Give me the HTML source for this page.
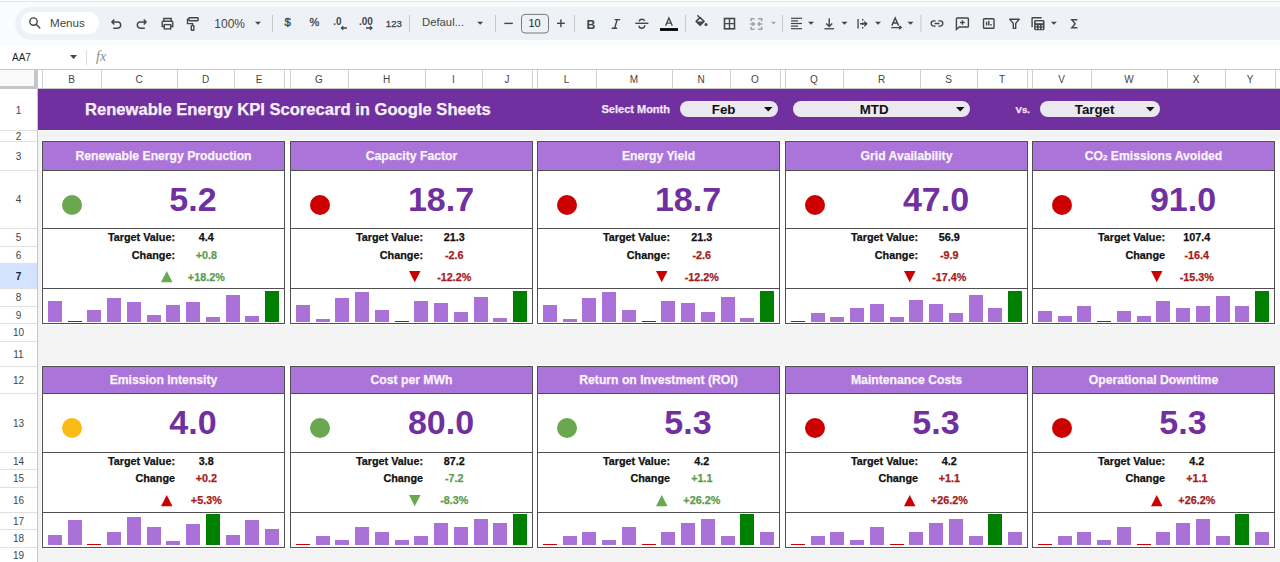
<!DOCTYPE html><html><head><meta charset="utf-8"><style>
*{box-sizing:border-box;margin:0;padding:0}
html,body{width:1280px;height:562px;overflow:hidden;background:#fff;font-family:"Liberation Sans", sans-serif}
.a{position:absolute}
.t{position:absolute;white-space:nowrap;line-height:1}
.s{-webkit-text-stroke:0.25px currentColor}
.ic{position:absolute;overflow:visible}

</style></head><body>
<div class="a" style="left:0;top:0;width:1280px;height:69px;background:#f9fbfd"></div>
<div class="a" style="left:0;top:1px;width:1280px;height:1px;background:#e6e6e6"></div>
<div class="a" style="left:15px;top:7px;width:1300px;height:33px;background:#eef1f6;border-radius:16.5px"></div>
<div class="a" style="left:0;top:46px;width:1280px;height:23px;background:#fff"></div>
<div class="a" style="left:21px;top:12px;width:78px;height:22px;background:#fff;border-radius:11px"></div>
<svg class="ic" style="left:0;top:0" width="1280" height="46" viewBox="0 0 1280 46"><circle cx="33.5" cy="21.6" r="3.7" fill="none" stroke="#444746" stroke-width="1.4"/><path d="M36.2 24.3L39.8 27.9" fill="none" stroke="#444746" stroke-width="1.4" stroke-linecap="round"/><path d="M114.3 19.4L111.8 22L114.3 24.6M112.2 22H117.6A3.1 3.1 0 0 1 117.6 28.2H113.2" fill="none" stroke="#444746" stroke-width="1.4" stroke-linejoin="round"/><path d="M143.7 19.4L146.2 22L143.7 24.6M145.8 22H140.4A3.1 3.1 0 0 0 140.4 28.2H144.8" fill="none" stroke="#444746" stroke-width="1.4" stroke-linejoin="round"/><path d="M163.8 21V18.5H171.2V21" fill="none" stroke="#444746" stroke-width="1.4"/><path d="M164 26.5H162.2V22.2Q162.2 21.2 163.2 21.2H171.8Q172.8 21.2 172.8 22.2V26.5H171" fill="none" stroke="#444746" stroke-width="1.4"/><rect x="164.3" y="24.6" width="6.4" height="4.3" fill="none" stroke="#444746" stroke-width="1.4"/><rect x="188.9" y="17.7" width="9.2" height="3" rx="0.6" fill="none" stroke="#444746" stroke-width="1.4"/><path d="M188.9 19.2H187.5V23.6H192.6V25.6" fill="none" stroke="#444746" stroke-width="1.4"/><rect x="191.3" y="25.6" width="2.6" height="4.6" rx="0.5" fill="none" stroke="#444746" stroke-width="1.4"/><path d="M255.0 21.8h6.0l-3.0 3.0z" fill="#444746"/><rect x="272.0" y="15" width="1" height="17" fill="#c7c7c7"/><rect x="409.0" y="15" width="1" height="17" fill="#c7c7c7"/><path d="M477.2 21.8h6.0l-3.0 3.0z" fill="#444746"/><rect x="495.0" y="15" width="1" height="17" fill="#c7c7c7"/><rect x="504.3" y="22.7" width="8.5" height="1.4" fill="#444746"/><rect x="521.5" y="14.4" width="27" height="18.6" rx="3.5" fill="none" stroke="#7a7a7a" stroke-width="1"/><rect x="557" y="22.6" width="7.8" height="1.4" fill="#444746"/><rect x="560.2" y="19.4" width="1.4" height="7.8" fill="#444746"/><rect x="574.0" y="15" width="1" height="17" fill="#c7c7c7"/><path d="M635.3 23.3H648.4" fill="none" stroke="#444746" stroke-width="1.4"/><path d="M639.2 21.3Q639.6 19.2 641.9 19.2Q644.2 19.2 644.6 21.0M644.7 25.3Q644.6 28.3 641.9 28.3Q639.1 28.3 639 25.8" fill="none" stroke="#444746" stroke-width="1.4"/><path d="M665.6 25.7L668.9 17.9L672.3 25.7M666.8 23.1H671.1" fill="none" stroke="#444746" stroke-width="1.4"/><rect x="660" y="28.1" width="18" height="2.8" fill="#000"/><rect x="685.0" y="15" width="1" height="17" fill="#c7c7c7"/><path d="M697.4 15.3L700.3 18.2" fill="none" stroke="#444746" stroke-width="1.4" stroke-width="1.6"/><path d="M696.2 21.4L700.1 17.5L704 21.4L700.1 25.3Z" fill="none" stroke="#444746" stroke-width="1.6" stroke-linejoin="round"/><path d="M696.2 21.4H704L700.1 25.3Z" fill="#444746"/><circle cx="706" cy="24.4" r="1.5" fill="#444746"/><rect x="724.5" y="18.5" width="10" height="10.3" fill="none" stroke="#444746" stroke-width="1.6" stroke-width="1.6"/><path d="M729.5 18.5V28.8M724.5 23.65H734.5" fill="none" stroke="#444746" stroke-width="1.4"/><path d="M754.6 18.8H751.2V21.3M751.2 26.7V29.2H754.6M758 18.8H761.6V21.3M761.6 26.7V29.2H758M749.8 24H754.3M752.6 22.2L754.4 24L752.6 25.8M762.6 24H758.1M759.8 22.2L758 24L759.8 25.8" fill="none" stroke="#a0a3a8" stroke-width="1.6"/><path d="M771.0 21.8h5.0l-2.5 2.8z" fill="#a0a3a8"/><rect x="782.0" y="15" width="1" height="17" fill="#c7c7c7"/><rect x="791" y="17.7" width="11.0" height="1.2" fill="#444746"/><rect x="791" y="20.3" width="7.0" height="1.2" fill="#444746"/><rect x="791" y="22.9" width="11.0" height="1.2" fill="#444746"/><rect x="791" y="25.5" width="7.0" height="1.2" fill="#444746"/><rect x="791" y="28.1" width="11.0" height="1.2" fill="#444746"/><path d="M808.0 21.8h6.0l-3.0 3.0z" fill="#444746"/><path d="M829.2 18.2V26.5M826.2 23.5L829.2 26.6L832.2 23.5" fill="none" stroke="#444746" stroke-width="1.4"/><rect x="824.4" y="28.1" width="9.6" height="1.3" fill="#444746"/><path d="M841.5 21.8h6.0l-3.0 3.0z" fill="#444746"/><rect x="857.4" y="19" width="1.3" height="9.6" fill="#444746"/><path d="M862.7 19V20.5M862.7 22.5V25M862.7 27V28.6" fill="none" stroke="#444746" stroke-width="1.4"/><path d="M860 23.8H866.7M864.3 21.4L866.7 23.8L864.3 26.2" fill="none" stroke="#444746" stroke-width="1.4"/><path d="M875.0 21.8h6.0l-3.0 3.0z" fill="#444746"/><path d="M891.8 25.6L895.2 18L898.6 25.6M893 23H897.4" fill="none" stroke="#444746" stroke-width="1.4"/><path d="M891.2 27.6H901.2M899.3 26L901.2 27.6L899.3 29.2" fill="none" stroke="#444746" stroke-width="1.4"/><path d="M907.5 21.8h6.0l-3.0 3.0z" fill="#444746"/><rect x="920.5" y="15" width="1" height="17" fill="#c7c7c7"/><path d="M935.6 20.9H933.8A2.6 2.6 0 0 0 933.8 26.1H935.6M938.4 20.9H940.2A2.6 2.6 0 0 1 940.2 26.1H938.4M934.6 23.5H939.4" fill="none" stroke="#444746" stroke-width="1.4" stroke-width="1.6"/><path d="M956.4 29.5V18.8Q956.4 18 957.2 18H967.6Q968.4 18 968.4 18.8V26.2Q968.4 27 967.6 27H959.2Z" fill="none" stroke="#444746" stroke-width="1.4"/><path d="M962.4 20.2V24.8M960.1 22.5H964.7" fill="none" stroke="#444746" stroke-width="1.4"/><rect x="983.5" y="18.7" width="10.5" height="9.6" rx="0.8" fill="none" stroke="#444746" stroke-width="1.4"/><path d="M986.6 21.8V25.6M988.8 20.8V25.6M991 24V25.6" fill="none" stroke="#444746" stroke-width="1.4" stroke-width="1.3"/><path d="M1009.8 19.2H1019.2L1015.7 23.4V28.4H1013.3V23.4Z" fill="none" stroke="#444746" stroke-width="1.4" stroke-linejoin="round"/><path d="M1032.1 27.2V18.3Q1032.1 17.7 1032.7 17.7H1041.6" fill="none" stroke="#444746" stroke-width="1.4" stroke-width="1.5"/><rect x="1034.1" y="20" width="10.4" height="10.3" rx="1.4" fill="#444746"/><rect x="1035.7" y="21.4" width="7.2" height="1.8" fill="#eef1f6"/><circle cx="1036.3" cy="25.7" r="0.8" fill="#eef1f6"/><circle cx="1039.3" cy="25.7" r="0.8" fill="#eef1f6"/><circle cx="1042.3" cy="25.7" r="0.8" fill="#eef1f6"/><circle cx="1036.3" cy="28.4" r="0.8" fill="#eef1f6"/><circle cx="1039.3" cy="28.4" r="0.8" fill="#eef1f6"/><circle cx="1042.3" cy="28.4" r="0.8" fill="#eef1f6"/><path d="M1050.8 21.8h6.0l-3.0 3.0z" fill="#444746"/><path d="M1077.4 19.8H1071.8L1075.2 23.8L1071.8 27.8H1077.4" fill="none" stroke="#444746" stroke-width="1.4" stroke-width="1.7" stroke-linejoin="miter"/><path d="M347 28H341.5M343.3 26.3L341.5 28L343.3 29.7" fill="none" stroke="#444746" stroke-width="1.4"/><path d="M366 28H371.8M370 26.3L371.8 28L370 29.7" fill="none" stroke="#444746" stroke-width="1.4"/><path d="M614.6 19.6H620.2M611.6 28.2H617.2M617.2 19.6L614.6 28.2" fill="none" stroke="#444746" stroke-width="1.4" stroke-width="1.6"/></svg>
<div class="t" style="left:50.0px;top:17.4px;font-size:11.6px;font-weight:normal;color:#444746;">Menus</div>
<div class="t" style="left:214.3px;top:17.6px;font-size:12px;font-weight:normal;color:#444746;">100%</div>
<div class="t" style="left:284.6px;top:16.8px;font-size:11.5px;font-weight:normal;color:#444746;-webkit-text-stroke:0.35px #444746">$</div>
<div class="t" style="left:309.6px;top:17.1px;font-size:11px;font-weight:normal;color:#444746;-webkit-text-stroke:0.3px #444746">%</div>
<div class="t" style="left:333.2px;top:17.2px;font-size:10px;font-weight:bold;color:#444746;">.0</div>
<div class="t" style="left:359.0px;top:17.2px;font-size:10px;font-weight:bold;color:#444746;">.00</div>
<div class="t" style="left:385.8px;top:18.6px;font-size:9.6px;font-weight:normal;color:#444746;-webkit-text-stroke:0.3px #444746">123</div>
<div class="t" style="left:422.0px;top:17.3px;font-size:11.3px;font-weight:normal;color:#444746;">Defaul...</div>
<div class="t" style="left:528.5px;top:18.3px;font-size:11px;font-weight:normal;color:#1f1f1f;">10</div>
<div class="t" style="left:586.6px;top:18.6px;font-size:12.2px;font-weight:bold;color:#444746;">B</div>
<div class="t" style="left:12px;top:53px;font-size:10px;color:#1f1f1f">AA7</div>
<svg class="ic" style="left:70px;top:55px" width="8" height="5"><path d="M0 0H7L3.5 4Z" fill="#444"/></svg>
<div class="a" style="left:86px;top:50px;width:1px;height:15px;background:#dadce0"></div>
<div class="t" style="left:96px;top:50px;font-size:14px;font-style:italic;color:#8a8a8a;font-family:'Liberation Serif',serif">fx</div>
<div class="a" style="left:0;top:69px;width:1280px;height:1px;background:#c7c7c7"></div>
<div class="a" style="left:0;top:70px;width:1280px;height:19px;background:#fff"></div>
<div class="a" style="left:0;top:70px;width:34px;height:16px;background:#f8f9fa"></div>
<div class="a" style="left:0;top:86px;width:34px;height:3px;background:#c4c7c5"></div>
<div class="a" style="left:34px;top:69px;width:4px;height:20px;background:#c4c7c5"></div>
<div class="a" style="left:38px;top:88px;width:1242px;height:1px;background:#c7c7c7"></div>
<div class="a" style="left:42px;top:70px;width:1px;height:18px;background:#d0d0d0"></div>
<div class="a" style="left:101px;top:70px;width:1px;height:18px;background:#d0d0d0"></div>
<div class="t" style="left:42px;top:74.5px;width:59px;text-align:center;font-size:10px;color:#444">B</div>
<div class="a" style="left:177px;top:70px;width:1px;height:18px;background:#d0d0d0"></div>
<div class="t" style="left:101px;top:74.5px;width:76px;text-align:center;font-size:10px;color:#444">C</div>
<div class="a" style="left:234px;top:70px;width:1px;height:18px;background:#d0d0d0"></div>
<div class="t" style="left:177px;top:74.5px;width:57px;text-align:center;font-size:10px;color:#444">D</div>
<div class="a" style="left:284px;top:70px;width:1px;height:18px;background:#d0d0d0"></div>
<div class="t" style="left:234px;top:74.5px;width:50px;text-align:center;font-size:10px;color:#444">E</div>
<div class="a" style="left:290px;top:70px;width:1px;height:18px;background:#d0d0d0"></div>
<div class="a" style="left:348px;top:70px;width:1px;height:18px;background:#d0d0d0"></div>
<div class="t" style="left:290px;top:74.5px;width:58px;text-align:center;font-size:10px;color:#444">G</div>
<div class="a" style="left:425px;top:70px;width:1px;height:18px;background:#d0d0d0"></div>
<div class="t" style="left:348px;top:74.5px;width:77px;text-align:center;font-size:10px;color:#444">H</div>
<div class="a" style="left:482px;top:70px;width:1px;height:18px;background:#d0d0d0"></div>
<div class="t" style="left:425px;top:74.5px;width:57px;text-align:center;font-size:10px;color:#444">I</div>
<div class="a" style="left:532px;top:70px;width:1px;height:18px;background:#d0d0d0"></div>
<div class="t" style="left:482px;top:74.5px;width:50px;text-align:center;font-size:10px;color:#444">J</div>
<div class="a" style="left:537px;top:70px;width:1px;height:18px;background:#d0d0d0"></div>
<div class="a" style="left:596px;top:70px;width:1px;height:18px;background:#d0d0d0"></div>
<div class="t" style="left:537px;top:74.5px;width:59px;text-align:center;font-size:10px;color:#444">L</div>
<div class="a" style="left:672px;top:70px;width:1px;height:18px;background:#d0d0d0"></div>
<div class="t" style="left:596px;top:74.5px;width:76px;text-align:center;font-size:10px;color:#444">M</div>
<div class="a" style="left:730px;top:70px;width:1px;height:18px;background:#d0d0d0"></div>
<div class="t" style="left:672px;top:74.5px;width:58px;text-align:center;font-size:10px;color:#444">N</div>
<div class="a" style="left:780px;top:70px;width:1px;height:18px;background:#d0d0d0"></div>
<div class="t" style="left:730px;top:74.5px;width:50px;text-align:center;font-size:10px;color:#444">O</div>
<div class="a" style="left:785px;top:70px;width:1px;height:18px;background:#d0d0d0"></div>
<div class="a" style="left:843px;top:70px;width:1px;height:18px;background:#d0d0d0"></div>
<div class="t" style="left:785px;top:74.5px;width:58px;text-align:center;font-size:10px;color:#444">Q</div>
<div class="a" style="left:920px;top:70px;width:1px;height:18px;background:#d0d0d0"></div>
<div class="t" style="left:843px;top:74.5px;width:77px;text-align:center;font-size:10px;color:#444">R</div>
<div class="a" style="left:977px;top:70px;width:1px;height:18px;background:#d0d0d0"></div>
<div class="t" style="left:920px;top:74.5px;width:57px;text-align:center;font-size:10px;color:#444">S</div>
<div class="a" style="left:1027px;top:70px;width:1px;height:18px;background:#d0d0d0"></div>
<div class="t" style="left:977px;top:74.5px;width:50px;text-align:center;font-size:10px;color:#444">T</div>
<div class="a" style="left:1032px;top:70px;width:1px;height:18px;background:#d0d0d0"></div>
<div class="a" style="left:1091px;top:70px;width:1px;height:18px;background:#d0d0d0"></div>
<div class="t" style="left:1032px;top:74.5px;width:59px;text-align:center;font-size:10px;color:#444">V</div>
<div class="a" style="left:1167px;top:70px;width:1px;height:18px;background:#d0d0d0"></div>
<div class="t" style="left:1091px;top:74.5px;width:76px;text-align:center;font-size:10px;color:#444">W</div>
<div class="a" style="left:1225px;top:70px;width:1px;height:18px;background:#d0d0d0"></div>
<div class="t" style="left:1167px;top:74.5px;width:58px;text-align:center;font-size:10px;color:#444">X</div>
<div class="a" style="left:1275px;top:70px;width:1px;height:18px;background:#d0d0d0"></div>
<div class="t" style="left:1225px;top:74.5px;width:50px;text-align:center;font-size:10px;color:#444">Y</div>
<div class="a" style="left:1330px;top:70px;width:1px;height:18px;background:#d0d0d0"></div>
<div class="a" style="left:0;top:89px;width:37px;height:473px;background:#fff"></div>
<div class="a" style="left:37px;top:89px;width:1px;height:473px;background:#c7c7c7"></div>
<div class="a" style="left:0;top:130px;width:37px;height:1px;background:#e0e0e0"></div>
<div class="t" style="left:0;top:105.5px;width:37px;text-align:center;font-size:10px;color:#444;font-weight:normal">1</div>
<div class="a" style="left:0;top:141px;width:37px;height:1px;background:#e0e0e0"></div>
<div class="t" style="left:0;top:131.5px;width:37px;text-align:center;font-size:10px;color:#444;font-weight:normal">2</div>
<div class="a" style="left:0;top:170px;width:37px;height:1px;background:#e0e0e0"></div>
<div class="t" style="left:0;top:151.5px;width:37px;text-align:center;font-size:10px;color:#444;font-weight:normal">3</div>
<div class="a" style="left:0;top:228px;width:37px;height:1px;background:#e0e0e0"></div>
<div class="t" style="left:0;top:195.0px;width:37px;text-align:center;font-size:10px;color:#444;font-weight:normal">4</div>
<div class="a" style="left:0;top:246px;width:37px;height:1px;background:#e0e0e0"></div>
<div class="t" style="left:0;top:233.0px;width:37px;text-align:center;font-size:10px;color:#444;font-weight:normal">5</div>
<div class="a" style="left:0;top:263px;width:37px;height:1px;background:#e0e0e0"></div>
<div class="t" style="left:0;top:250.5px;width:37px;text-align:center;font-size:10px;color:#444;font-weight:normal">6</div>
<div class="a" style="left:0;top:264px;width:37px;height:24px;background:#d3e3fd"></div>
<div class="a" style="left:0;top:288px;width:37px;height:1px;background:#e0e0e0"></div>
<div class="t" style="left:0;top:271.5px;width:37px;text-align:center;font-size:10px;color:#041e49;font-weight:bold">7</div>
<div class="a" style="left:0;top:306px;width:37px;height:1px;background:#e0e0e0"></div>
<div class="t" style="left:0;top:293.0px;width:37px;text-align:center;font-size:10px;color:#444;font-weight:normal">8</div>
<div class="a" style="left:0;top:323px;width:37px;height:1px;background:#e0e0e0"></div>
<div class="t" style="left:0;top:310.5px;width:37px;text-align:center;font-size:10px;color:#444;font-weight:normal">9</div>
<div class="a" style="left:0;top:341px;width:37px;height:1px;background:#e0e0e0"></div>
<div class="t" style="left:0;top:328.0px;width:37px;text-align:center;font-size:10px;color:#444;font-weight:normal">10</div>
<div class="a" style="left:0;top:366px;width:37px;height:1px;background:#e0e0e0"></div>
<div class="t" style="left:0;top:349.5px;width:37px;text-align:center;font-size:10px;color:#444;font-weight:normal">11</div>
<div class="a" style="left:0;top:393px;width:37px;height:1px;background:#e0e0e0"></div>
<div class="t" style="left:0;top:375.5px;width:37px;text-align:center;font-size:10px;color:#444;font-weight:normal">12</div>
<div class="a" style="left:0;top:452px;width:37px;height:1px;background:#e0e0e0"></div>
<div class="t" style="left:0;top:418.5px;width:37px;text-align:center;font-size:10px;color:#444;font-weight:normal">13</div>
<div class="a" style="left:0;top:469px;width:37px;height:1px;background:#e0e0e0"></div>
<div class="t" style="left:0;top:456.5px;width:37px;text-align:center;font-size:10px;color:#444;font-weight:normal">14</div>
<div class="a" style="left:0;top:487px;width:37px;height:1px;background:#e0e0e0"></div>
<div class="t" style="left:0;top:474.0px;width:37px;text-align:center;font-size:10px;color:#444;font-weight:normal">15</div>
<div class="a" style="left:0;top:512px;width:37px;height:1px;background:#e0e0e0"></div>
<div class="t" style="left:0;top:495.5px;width:37px;text-align:center;font-size:10px;color:#444;font-weight:normal">16</div>
<div class="a" style="left:0;top:529px;width:37px;height:1px;background:#e0e0e0"></div>
<div class="t" style="left:0;top:516.5px;width:37px;text-align:center;font-size:10px;color:#444;font-weight:normal">17</div>
<div class="a" style="left:0;top:547px;width:37px;height:1px;background:#e0e0e0"></div>
<div class="t" style="left:0;top:534.0px;width:37px;text-align:center;font-size:10px;color:#444;font-weight:normal">18</div>
<div class="a" style="left:0;top:562px;width:37px;height:1px;background:#e0e0e0"></div>
<div class="t" style="left:0;top:550.5px;width:37px;text-align:center;font-size:10px;color:#444;font-weight:normal">19</div>
<div class="a" style="left:38px;top:89px;width:1242px;height:473px;background:#f3f3f3"></div>
<div class="a" style="left:38px;top:89px;width:1242px;height:41px;background:#7030a0"></div>
<div class="a" style="left:38px;top:130px;width:1242px;height:1px;background:#fff"></div>
<div class="t s" style="left:85px;top:102px;font-size:16.6px;font-weight:bold;color:#f7f0fb">Renewable Energy KPI Scorecard in Google Sheets</div>
<div class="t s" style="left:601.5px;top:104.3px;font-size:11px;font-weight:bold;color:#f3e8fa">Select Month</div>
<div class="a" style="left:680px;top:101px;width:98px;height:16px;background:#ebe8ef;border-radius:8px"></div>
<div class="t" style="left:680.6px;top:102.6px;width:86px;text-align:center;font-size:13.3px;font-weight:bold;color:#111">Feb</div>
<svg class="ic" style="left:764px;top:107px" width="9" height="5"><path d="M0 0H8.5L4.25 4.5Z" fill="#111"/></svg>
<div class="a" style="left:793px;top:101px;width:177px;height:16px;background:#ebe8ef;border-radius:8px"></div>
<div class="t" style="left:793.6px;top:102.6px;width:161px;text-align:center;font-size:13.3px;font-weight:bold;color:#111">MTD</div>
<svg class="ic" style="left:956px;top:107px" width="9" height="5"><path d="M0 0H8.5L4.25 4.5Z" fill="#111"/></svg>
<div class="t s" style="left:1015.5px;top:104.8px;font-size:9.6px;font-weight:bold;color:#f3e8fa">Vs.</div>
<div class="a" style="left:1040px;top:101px;width:120px;height:16px;background:#ebe8ef;border-radius:8px"></div>
<div class="t" style="left:1040.6px;top:102.6px;width:108px;text-align:center;font-size:13.3px;font-weight:bold;color:#111">Target</div>
<svg class="ic" style="left:1146px;top:107px" width="9" height="5"><path d="M0 0H8.5L4.25 4.5Z" fill="#111"/></svg>
<div class="a" style="left:41px;top:140px;width:249px;height:185px;background:#fff"></div>
<div class="a" style="left:42px;top:141px;width:243px;height:29px;background:#ab74d8"></div>
<div class="a" style="left:42px;top:141px;width:243px;height:183px;border:1px solid #505050"></div>
<div class="a" style="left:42px;top:170px;width:243px;height:1px;background:#505050"></div>
<div class="a" style="left:42px;top:228px;width:243px;height:1px;background:#505050"></div>
<div class="a" style="left:42px;top:288px;width:243px;height:1px;background:#505050"></div>
<div class="t s" style="left:42px;top:150.45px;width:243px;text-align:center;font-size:12.2px;font-weight:bold;color:#faf3fd">Renewable Energy Production</div>
<div class="a" style="left:61.5px;top:194.5px;width:20.5px;height:20.5px;border-radius:50%;background:#6aa84f"></div>
<div class="t" style="left:123px;top:182px;width:140px;text-align:center;font-size:34px;font-weight:bold;color:#7030a0">5.2</div>
<div class="t s" style="left:75px;top:231.9px;width:100px;text-align:right;font-size:10.8px;font-weight:bold;color:#111">Target Value:</div>
<div class="t s" style="left:166.3px;top:231.9px;width:80px;text-align:center;font-size:10.8px;font-weight:bold;color:#111">4.4</div>
<div class="t s" style="left:75px;top:250.2px;width:100px;text-align:right;font-size:10.8px;font-weight:bold;color:#111">Change:</div>
<div class="t s" style="left:166.3px;top:250.2px;width:80px;text-align:center;font-size:10.8px;font-weight:bold;color:#5e9c4d">+0.8</div>
<div class="t s" style="left:166.3px;top:271.8px;width:80px;text-align:center;font-size:10.8px;font-weight:bold;color:#5e9c4d">+18.2%</div>
<svg class="ic" style="left:161px;top:271px" width="12" height="12"><path d="M0 11.3L5.75 0L11.5 11.3Z" fill="#6aa84f"/></svg>
<div class="a" style="left:48.0px;top:301.1px;width:14px;height:20.7px;background:#aa72d9"></div>
<div class="a" style="left:67.7px;top:320.8px;width:14px;height:1px;background:#cc0000"></div>
<div class="a" style="left:87.4px;top:309.9px;width:14px;height:11.9px;background:#aa72d9"></div>
<div class="a" style="left:107.2px;top:298.0px;width:14px;height:23.8px;background:#aa72d9"></div>
<div class="a" style="left:126.9px;top:302.3px;width:14px;height:19.5px;background:#aa72d9"></div>
<div class="a" style="left:146.6px;top:314.8px;width:14px;height:7.0px;background:#aa72d9"></div>
<div class="a" style="left:166.3px;top:305.3px;width:14px;height:16.5px;background:#aa72d9"></div>
<div class="a" style="left:186.0px;top:302.0px;width:14px;height:19.8px;background:#aa72d9"></div>
<div class="a" style="left:205.8px;top:317.0px;width:14px;height:4.8px;background:#aa72d9"></div>
<div class="a" style="left:225.5px;top:295.2px;width:14px;height:26.6px;background:#aa72d9"></div>
<div class="a" style="left:245.2px;top:315.5px;width:14px;height:6.3px;background:#aa72d9"></div>
<div class="a" style="left:264.9px;top:291.1px;width:14px;height:30.7px;background:#008000"></div>
<div class="a" style="left:289px;top:140px;width:249px;height:185px;background:#fff"></div>
<div class="a" style="left:290px;top:141px;width:243px;height:29px;background:#ab74d8"></div>
<div class="a" style="left:290px;top:141px;width:243px;height:183px;border:1px solid #505050"></div>
<div class="a" style="left:290px;top:170px;width:243px;height:1px;background:#505050"></div>
<div class="a" style="left:290px;top:228px;width:243px;height:1px;background:#505050"></div>
<div class="a" style="left:290px;top:288px;width:243px;height:1px;background:#505050"></div>
<div class="t s" style="left:290px;top:150.45px;width:243px;text-align:center;font-size:12.2px;font-weight:bold;color:#faf3fd">Capacity Factor</div>
<div class="a" style="left:309.5px;top:194.5px;width:20.5px;height:20.5px;border-radius:50%;background:#cc0000"></div>
<div class="t" style="left:371px;top:182px;width:140px;text-align:center;font-size:34px;font-weight:bold;color:#7030a0">18.7</div>
<div class="t s" style="left:323px;top:231.9px;width:100px;text-align:right;font-size:10.8px;font-weight:bold;color:#111">Target Value:</div>
<div class="t s" style="left:414.3px;top:231.9px;width:80px;text-align:center;font-size:10.8px;font-weight:bold;color:#111">21.3</div>
<div class="t s" style="left:323px;top:250.2px;width:100px;text-align:right;font-size:10.8px;font-weight:bold;color:#111">Change:</div>
<div class="t s" style="left:414.3px;top:250.2px;width:80px;text-align:center;font-size:10.8px;font-weight:bold;color:#a51c1c">-2.6</div>
<div class="t s" style="left:414.3px;top:271.8px;width:80px;text-align:center;font-size:10.8px;font-weight:bold;color:#a51c1c">-12.2%</div>
<svg class="ic" style="left:409px;top:271px" width="12" height="12"><path d="M0 0L11.5 0L5.75 11.3Z" fill="#cc0000"/></svg>
<div class="a" style="left:296.0px;top:304.6px;width:14px;height:17.2px;background:#aa72d9"></div>
<div class="a" style="left:315.7px;top:319.0px;width:14px;height:2.7px;background:#aa72d9"></div>
<div class="a" style="left:335.4px;top:298.0px;width:14px;height:23.8px;background:#aa72d9"></div>
<div class="a" style="left:355.2px;top:291.6px;width:14px;height:30.2px;background:#aa72d9"></div>
<div class="a" style="left:374.9px;top:310.4px;width:14px;height:11.4px;background:#aa72d9"></div>
<div class="a" style="left:394.6px;top:320.8px;width:14px;height:1px;background:#cc0000"></div>
<div class="a" style="left:414.3px;top:301.1px;width:14px;height:20.7px;background:#aa72d9"></div>
<div class="a" style="left:434.0px;top:303.0px;width:14px;height:18.8px;background:#aa72d9"></div>
<div class="a" style="left:453.8px;top:311.9px;width:14px;height:9.9px;background:#aa72d9"></div>
<div class="a" style="left:473.5px;top:296.7px;width:14px;height:25.1px;background:#aa72d9"></div>
<div class="a" style="left:493.2px;top:317.7px;width:14px;height:4.1px;background:#aa72d9"></div>
<div class="a" style="left:512.9px;top:291.1px;width:14px;height:30.7px;background:#008000"></div>
<div class="a" style="left:536px;top:140px;width:249px;height:185px;background:#fff"></div>
<div class="a" style="left:537px;top:141px;width:243px;height:29px;background:#ab74d8"></div>
<div class="a" style="left:537px;top:141px;width:243px;height:183px;border:1px solid #505050"></div>
<div class="a" style="left:537px;top:170px;width:243px;height:1px;background:#505050"></div>
<div class="a" style="left:537px;top:228px;width:243px;height:1px;background:#505050"></div>
<div class="a" style="left:537px;top:288px;width:243px;height:1px;background:#505050"></div>
<div class="t s" style="left:537px;top:150.45px;width:243px;text-align:center;font-size:12.2px;font-weight:bold;color:#faf3fd">Energy Yield</div>
<div class="a" style="left:556.5px;top:194.5px;width:20.5px;height:20.5px;border-radius:50%;background:#cc0000"></div>
<div class="t" style="left:618px;top:182px;width:140px;text-align:center;font-size:34px;font-weight:bold;color:#7030a0">18.7</div>
<div class="t s" style="left:570px;top:231.9px;width:100px;text-align:right;font-size:10.8px;font-weight:bold;color:#111">Target Value:</div>
<div class="t s" style="left:661.8px;top:231.9px;width:80px;text-align:center;font-size:10.8px;font-weight:bold;color:#111">21.3</div>
<div class="t s" style="left:570px;top:250.2px;width:100px;text-align:right;font-size:10.8px;font-weight:bold;color:#111">Change:</div>
<div class="t s" style="left:661.8px;top:250.2px;width:80px;text-align:center;font-size:10.8px;font-weight:bold;color:#a51c1c">-2.6</div>
<div class="t s" style="left:661.8px;top:271.8px;width:80px;text-align:center;font-size:10.8px;font-weight:bold;color:#a51c1c">-12.2%</div>
<svg class="ic" style="left:656px;top:271px" width="12" height="12"><path d="M0 0L11.5 0L5.75 11.3Z" fill="#cc0000"/></svg>
<div class="a" style="left:543.0px;top:304.6px;width:14px;height:17.2px;background:#aa72d9"></div>
<div class="a" style="left:562.7px;top:319.0px;width:14px;height:2.7px;background:#aa72d9"></div>
<div class="a" style="left:582.4px;top:298.0px;width:14px;height:23.8px;background:#aa72d9"></div>
<div class="a" style="left:602.2px;top:291.6px;width:14px;height:30.2px;background:#aa72d9"></div>
<div class="a" style="left:621.9px;top:310.4px;width:14px;height:11.4px;background:#aa72d9"></div>
<div class="a" style="left:641.6px;top:320.8px;width:14px;height:1px;background:#cc0000"></div>
<div class="a" style="left:661.3px;top:301.1px;width:14px;height:20.7px;background:#aa72d9"></div>
<div class="a" style="left:681.0px;top:303.0px;width:14px;height:18.8px;background:#aa72d9"></div>
<div class="a" style="left:700.8px;top:311.9px;width:14px;height:9.9px;background:#aa72d9"></div>
<div class="a" style="left:720.5px;top:296.7px;width:14px;height:25.1px;background:#aa72d9"></div>
<div class="a" style="left:740.2px;top:317.7px;width:14px;height:4.1px;background:#aa72d9"></div>
<div class="a" style="left:759.9px;top:291.1px;width:14px;height:30.7px;background:#008000"></div>
<div class="a" style="left:784px;top:140px;width:249px;height:185px;background:#fff"></div>
<div class="a" style="left:785px;top:141px;width:243px;height:29px;background:#ab74d8"></div>
<div class="a" style="left:785px;top:141px;width:243px;height:183px;border:1px solid #505050"></div>
<div class="a" style="left:785px;top:170px;width:243px;height:1px;background:#505050"></div>
<div class="a" style="left:785px;top:228px;width:243px;height:1px;background:#505050"></div>
<div class="a" style="left:785px;top:288px;width:243px;height:1px;background:#505050"></div>
<div class="t s" style="left:785px;top:150.45px;width:243px;text-align:center;font-size:12.2px;font-weight:bold;color:#faf3fd">Grid Availability</div>
<div class="a" style="left:804.5px;top:194.5px;width:20.5px;height:20.5px;border-radius:50%;background:#cc0000"></div>
<div class="t" style="left:866px;top:182px;width:140px;text-align:center;font-size:34px;font-weight:bold;color:#7030a0">47.0</div>
<div class="t s" style="left:818px;top:231.9px;width:100px;text-align:right;font-size:10.8px;font-weight:bold;color:#111">Target Value:</div>
<div class="t s" style="left:909.3px;top:231.9px;width:80px;text-align:center;font-size:10.8px;font-weight:bold;color:#111">56.9</div>
<div class="t s" style="left:818px;top:250.2px;width:100px;text-align:right;font-size:10.8px;font-weight:bold;color:#111">Change:</div>
<div class="t s" style="left:909.3px;top:250.2px;width:80px;text-align:center;font-size:10.8px;font-weight:bold;color:#a51c1c">-9.9</div>
<div class="t s" style="left:909.3px;top:271.8px;width:80px;text-align:center;font-size:10.8px;font-weight:bold;color:#a51c1c">-17.4%</div>
<svg class="ic" style="left:904px;top:271px" width="12" height="12"><path d="M0 0L11.5 0L5.75 11.3Z" fill="#cc0000"/></svg>
<div class="a" style="left:791.0px;top:320.8px;width:14px;height:1px;background:#cc0000"></div>
<div class="a" style="left:810.7px;top:312.9px;width:14px;height:8.8px;background:#aa72d9"></div>
<div class="a" style="left:830.4px;top:317.0px;width:14px;height:4.8px;background:#aa72d9"></div>
<div class="a" style="left:850.2px;top:308.2px;width:14px;height:13.6px;background:#aa72d9"></div>
<div class="a" style="left:869.9px;top:304.1px;width:14px;height:17.7px;background:#aa72d9"></div>
<div class="a" style="left:889.6px;top:317.0px;width:14px;height:4.8px;background:#aa72d9"></div>
<div class="a" style="left:909.3px;top:299.5px;width:14px;height:22.2px;background:#aa72d9"></div>
<div class="a" style="left:929.0px;top:304.1px;width:14px;height:17.7px;background:#aa72d9"></div>
<div class="a" style="left:948.8px;top:312.9px;width:14px;height:8.8px;background:#aa72d9"></div>
<div class="a" style="left:968.5px;top:295.2px;width:14px;height:26.6px;background:#aa72d9"></div>
<div class="a" style="left:988.2px;top:308.2px;width:14px;height:13.6px;background:#aa72d9"></div>
<div class="a" style="left:1007.9px;top:291.1px;width:14px;height:30.7px;background:#008000"></div>
<div class="a" style="left:1031px;top:140px;width:249px;height:185px;background:#fff"></div>
<div class="a" style="left:1032px;top:141px;width:243px;height:29px;background:#ab74d8"></div>
<div class="a" style="left:1032px;top:141px;width:243px;height:183px;border:1px solid #505050"></div>
<div class="a" style="left:1032px;top:170px;width:243px;height:1px;background:#505050"></div>
<div class="a" style="left:1032px;top:228px;width:243px;height:1px;background:#505050"></div>
<div class="a" style="left:1032px;top:288px;width:243px;height:1px;background:#505050"></div>
<div class="t s" style="left:1032px;top:150.45px;width:243px;text-align:center;font-size:12.2px;font-weight:bold;color:#faf3fd">CO<span style="font-size:8px">2</span> Emissions Avoided</div>
<div class="a" style="left:1051.5px;top:194.5px;width:20.5px;height:20.5px;border-radius:50%;background:#cc0000"></div>
<div class="t" style="left:1113px;top:182px;width:140px;text-align:center;font-size:34px;font-weight:bold;color:#7030a0">91.0</div>
<div class="t s" style="left:1065px;top:231.9px;width:100px;text-align:right;font-size:10.8px;font-weight:bold;color:#111">Target Value:</div>
<div class="t s" style="left:1156.8px;top:231.9px;width:80px;text-align:center;font-size:10.8px;font-weight:bold;color:#111">107.4</div>
<div class="t s" style="left:1065px;top:250.2px;width:100px;text-align:right;font-size:10.8px;font-weight:bold;color:#111">Change</div>
<div class="t s" style="left:1156.8px;top:250.2px;width:80px;text-align:center;font-size:10.8px;font-weight:bold;color:#a51c1c">-16.4</div>
<div class="t s" style="left:1156.8px;top:271.8px;width:80px;text-align:center;font-size:10.8px;font-weight:bold;color:#a51c1c">-15.3%</div>
<svg class="ic" style="left:1151px;top:271px" width="12" height="12"><path d="M0 0L11.5 0L5.75 11.3Z" fill="#cc0000"/></svg>
<div class="a" style="left:1038.0px;top:311.2px;width:14px;height:10.6px;background:#aa72d9"></div>
<div class="a" style="left:1057.7px;top:316.3px;width:14px;height:5.5px;background:#aa72d9"></div>
<div class="a" style="left:1077.4px;top:306.1px;width:14px;height:15.6px;background:#aa72d9"></div>
<div class="a" style="left:1097.2px;top:320.8px;width:14px;height:1px;background:#cc0000"></div>
<div class="a" style="left:1116.9px;top:311.2px;width:14px;height:10.6px;background:#aa72d9"></div>
<div class="a" style="left:1136.6px;top:316.3px;width:14px;height:5.5px;background:#aa72d9"></div>
<div class="a" style="left:1156.3px;top:301.1px;width:14px;height:20.7px;background:#aa72d9"></div>
<div class="a" style="left:1176.0px;top:308.2px;width:14px;height:13.6px;background:#aa72d9"></div>
<div class="a" style="left:1195.8px;top:306.1px;width:14px;height:15.6px;background:#aa72d9"></div>
<div class="a" style="left:1215.5px;top:296.2px;width:14px;height:25.6px;background:#aa72d9"></div>
<div class="a" style="left:1235.2px;top:306.1px;width:14px;height:15.6px;background:#aa72d9"></div>
<div class="a" style="left:1254.9px;top:291.1px;width:14px;height:30.7px;background:#008000"></div>
<div class="a" style="left:41px;top:365px;width:249px;height:184px;background:#fff"></div>
<div class="a" style="left:42px;top:366px;width:243px;height:27px;background:#ab74d8"></div>
<div class="a" style="left:42px;top:366px;width:243px;height:182px;border:1px solid #505050"></div>
<div class="a" style="left:42px;top:393px;width:243px;height:1px;background:#505050"></div>
<div class="a" style="left:42px;top:452px;width:243px;height:1px;background:#505050"></div>
<div class="a" style="left:42px;top:512px;width:243px;height:1px;background:#505050"></div>
<div class="t s" style="left:42px;top:374.45px;width:243px;text-align:center;font-size:12.2px;font-weight:bold;color:#faf3fd">Emission Intensity</div>
<div class="a" style="left:61.5px;top:417.5px;width:20.5px;height:20.5px;border-radius:50%;background:#f9bb14"></div>
<div class="t" style="left:123px;top:405px;width:140px;text-align:center;font-size:34px;font-weight:bold;color:#7030a0">4.0</div>
<div class="t s" style="left:75px;top:456.3px;width:100px;text-align:right;font-size:10.8px;font-weight:bold;color:#111">Target Value:</div>
<div class="t s" style="left:166.3px;top:456.3px;width:80px;text-align:center;font-size:10.8px;font-weight:bold;color:#111">3.8</div>
<div class="t s" style="left:75px;top:473.0px;width:100px;text-align:right;font-size:10.8px;font-weight:bold;color:#111">Change</div>
<div class="t s" style="left:166.3px;top:473.0px;width:80px;text-align:center;font-size:10.8px;font-weight:bold;color:#a51c1c">+0.2</div>
<div class="t s" style="left:166.3px;top:494.9px;width:80px;text-align:center;font-size:10.8px;font-weight:bold;color:#a51c1c">+5.3%</div>
<svg class="ic" style="left:161px;top:495px" width="12" height="12"><path d="M0 11.3L5.75 0L11.5 11.3Z" fill="#cc0000"/></svg>
<div class="a" style="left:48.0px;top:535.2px;width:14px;height:9.5px;background:#aa72d9"></div>
<div class="a" style="left:67.7px;top:520.0px;width:14px;height:24.8px;background:#aa72d9"></div>
<div class="a" style="left:87.4px;top:543.8px;width:14px;height:1px;background:#cc0000"></div>
<div class="a" style="left:107.2px;top:532.2px;width:14px;height:12.6px;background:#aa72d9"></div>
<div class="a" style="left:126.9px;top:517.1px;width:14px;height:27.6px;background:#aa72d9"></div>
<div class="a" style="left:146.6px;top:526.6px;width:14px;height:18.2px;background:#aa72d9"></div>
<div class="a" style="left:166.3px;top:541.0px;width:14px;height:3.8px;background:#aa72d9"></div>
<div class="a" style="left:186.0px;top:523.7px;width:14px;height:21.0px;background:#aa72d9"></div>
<div class="a" style="left:205.8px;top:514.1px;width:14px;height:30.7px;background:#008000"></div>
<div class="a" style="left:225.5px;top:535.2px;width:14px;height:9.5px;background:#aa72d9"></div>
<div class="a" style="left:245.2px;top:520.0px;width:14px;height:24.8px;background:#aa72d9"></div>
<div class="a" style="left:264.9px;top:529.3px;width:14px;height:15.4px;background:#aa72d9"></div>
<div class="a" style="left:289px;top:365px;width:249px;height:184px;background:#fff"></div>
<div class="a" style="left:290px;top:366px;width:243px;height:27px;background:#ab74d8"></div>
<div class="a" style="left:290px;top:366px;width:243px;height:182px;border:1px solid #505050"></div>
<div class="a" style="left:290px;top:393px;width:243px;height:1px;background:#505050"></div>
<div class="a" style="left:290px;top:452px;width:243px;height:1px;background:#505050"></div>
<div class="a" style="left:290px;top:512px;width:243px;height:1px;background:#505050"></div>
<div class="t s" style="left:290px;top:374.45px;width:243px;text-align:center;font-size:12.2px;font-weight:bold;color:#faf3fd">Cost per MWh</div>
<div class="a" style="left:309.5px;top:417.5px;width:20.5px;height:20.5px;border-radius:50%;background:#6aa84f"></div>
<div class="t" style="left:371px;top:405px;width:140px;text-align:center;font-size:34px;font-weight:bold;color:#7030a0">80.0</div>
<div class="t s" style="left:323px;top:456.3px;width:100px;text-align:right;font-size:10.8px;font-weight:bold;color:#111">Target Value:</div>
<div class="t s" style="left:414.3px;top:456.3px;width:80px;text-align:center;font-size:10.8px;font-weight:bold;color:#111">87.2</div>
<div class="t s" style="left:323px;top:473.0px;width:100px;text-align:right;font-size:10.8px;font-weight:bold;color:#111">Change</div>
<div class="t s" style="left:414.3px;top:473.0px;width:80px;text-align:center;font-size:10.8px;font-weight:bold;color:#5e9c4d">-7.2</div>
<div class="t s" style="left:414.3px;top:494.9px;width:80px;text-align:center;font-size:10.8px;font-weight:bold;color:#5e9c4d">-8.3%</div>
<svg class="ic" style="left:409px;top:495px" width="12" height="12"><path d="M0 0L11.5 0L5.75 11.3Z" fill="#6aa84f"/></svg>
<div class="a" style="left:296.0px;top:543.8px;width:14px;height:1px;background:#cc0000"></div>
<div class="a" style="left:315.7px;top:535.9px;width:14px;height:8.8px;background:#aa72d9"></div>
<div class="a" style="left:335.4px;top:540.3px;width:14px;height:4.5px;background:#aa72d9"></div>
<div class="a" style="left:355.2px;top:527.1px;width:14px;height:17.7px;background:#aa72d9"></div>
<div class="a" style="left:374.9px;top:531.7px;width:14px;height:13.1px;background:#aa72d9"></div>
<div class="a" style="left:394.6px;top:540.3px;width:14px;height:4.5px;background:#aa72d9"></div>
<div class="a" style="left:414.3px;top:535.9px;width:14px;height:8.8px;background:#aa72d9"></div>
<div class="a" style="left:434.0px;top:523.0px;width:14px;height:21.7px;background:#aa72d9"></div>
<div class="a" style="left:453.8px;top:527.1px;width:14px;height:17.7px;background:#aa72d9"></div>
<div class="a" style="left:473.5px;top:518.7px;width:14px;height:26.1px;background:#aa72d9"></div>
<div class="a" style="left:493.2px;top:523.0px;width:14px;height:21.7px;background:#aa72d9"></div>
<div class="a" style="left:512.9px;top:514.1px;width:14px;height:30.7px;background:#008000"></div>
<div class="a" style="left:536px;top:365px;width:249px;height:184px;background:#fff"></div>
<div class="a" style="left:537px;top:366px;width:243px;height:27px;background:#ab74d8"></div>
<div class="a" style="left:537px;top:366px;width:243px;height:182px;border:1px solid #505050"></div>
<div class="a" style="left:537px;top:393px;width:243px;height:1px;background:#505050"></div>
<div class="a" style="left:537px;top:452px;width:243px;height:1px;background:#505050"></div>
<div class="a" style="left:537px;top:512px;width:243px;height:1px;background:#505050"></div>
<div class="t s" style="left:537px;top:374.45px;width:243px;text-align:center;font-size:12.2px;font-weight:bold;color:#faf3fd">Return on Investment (ROI)</div>
<div class="a" style="left:556.5px;top:417.5px;width:20.5px;height:20.5px;border-radius:50%;background:#6aa84f"></div>
<div class="t" style="left:618px;top:405px;width:140px;text-align:center;font-size:34px;font-weight:bold;color:#7030a0">5.3</div>
<div class="t s" style="left:570px;top:456.3px;width:100px;text-align:right;font-size:10.8px;font-weight:bold;color:#111">Target Value:</div>
<div class="t s" style="left:661.8px;top:456.3px;width:80px;text-align:center;font-size:10.8px;font-weight:bold;color:#111">4.2</div>
<div class="t s" style="left:570px;top:473.0px;width:100px;text-align:right;font-size:10.8px;font-weight:bold;color:#111">Change</div>
<div class="t s" style="left:661.8px;top:473.0px;width:80px;text-align:center;font-size:10.8px;font-weight:bold;color:#5e9c4d">+1.1</div>
<div class="t s" style="left:661.8px;top:494.9px;width:80px;text-align:center;font-size:10.8px;font-weight:bold;color:#5e9c4d">+26.2%</div>
<svg class="ic" style="left:656px;top:495px" width="12" height="12"><path d="M0 11.3L5.75 0L11.5 11.3Z" fill="#6aa84f"/></svg>
<div class="a" style="left:543.0px;top:543.8px;width:14px;height:1px;background:#cc0000"></div>
<div class="a" style="left:562.7px;top:535.9px;width:14px;height:8.8px;background:#aa72d9"></div>
<div class="a" style="left:582.4px;top:531.7px;width:14px;height:13.1px;background:#aa72d9"></div>
<div class="a" style="left:602.2px;top:540.3px;width:14px;height:4.5px;background:#aa72d9"></div>
<div class="a" style="left:621.9px;top:527.1px;width:14px;height:17.7px;background:#aa72d9"></div>
<div class="a" style="left:641.6px;top:543.8px;width:14px;height:1px;background:#cc0000"></div>
<div class="a" style="left:661.3px;top:531.7px;width:14px;height:13.1px;background:#aa72d9"></div>
<div class="a" style="left:681.0px;top:523.0px;width:14px;height:21.7px;background:#aa72d9"></div>
<div class="a" style="left:700.8px;top:518.7px;width:14px;height:26.1px;background:#aa72d9"></div>
<div class="a" style="left:720.5px;top:535.9px;width:14px;height:8.8px;background:#aa72d9"></div>
<div class="a" style="left:740.2px;top:514.1px;width:14px;height:30.7px;background:#008000"></div>
<div class="a" style="left:759.9px;top:531.7px;width:14px;height:13.1px;background:#aa72d9"></div>
<div class="a" style="left:784px;top:365px;width:249px;height:184px;background:#fff"></div>
<div class="a" style="left:785px;top:366px;width:243px;height:27px;background:#ab74d8"></div>
<div class="a" style="left:785px;top:366px;width:243px;height:182px;border:1px solid #505050"></div>
<div class="a" style="left:785px;top:393px;width:243px;height:1px;background:#505050"></div>
<div class="a" style="left:785px;top:452px;width:243px;height:1px;background:#505050"></div>
<div class="a" style="left:785px;top:512px;width:243px;height:1px;background:#505050"></div>
<div class="t s" style="left:785px;top:374.45px;width:243px;text-align:center;font-size:12.2px;font-weight:bold;color:#faf3fd">Maintenance Costs</div>
<div class="a" style="left:804.5px;top:417.5px;width:20.5px;height:20.5px;border-radius:50%;background:#cc0000"></div>
<div class="t" style="left:866px;top:405px;width:140px;text-align:center;font-size:34px;font-weight:bold;color:#7030a0">5.3</div>
<div class="t s" style="left:818px;top:456.3px;width:100px;text-align:right;font-size:10.8px;font-weight:bold;color:#111">Target Value:</div>
<div class="t s" style="left:909.3px;top:456.3px;width:80px;text-align:center;font-size:10.8px;font-weight:bold;color:#111">4.2</div>
<div class="t s" style="left:818px;top:473.0px;width:100px;text-align:right;font-size:10.8px;font-weight:bold;color:#111">Change</div>
<div class="t s" style="left:909.3px;top:473.0px;width:80px;text-align:center;font-size:10.8px;font-weight:bold;color:#a51c1c">+1.1</div>
<div class="t s" style="left:909.3px;top:494.9px;width:80px;text-align:center;font-size:10.8px;font-weight:bold;color:#a51c1c">+26.2%</div>
<svg class="ic" style="left:904px;top:495px" width="12" height="12"><path d="M0 11.3L5.75 0L11.5 11.3Z" fill="#cc0000"/></svg>
<div class="a" style="left:791.0px;top:543.8px;width:14px;height:1px;background:#cc0000"></div>
<div class="a" style="left:810.7px;top:535.9px;width:14px;height:8.8px;background:#aa72d9"></div>
<div class="a" style="left:830.4px;top:531.7px;width:14px;height:13.1px;background:#aa72d9"></div>
<div class="a" style="left:850.2px;top:540.3px;width:14px;height:4.5px;background:#aa72d9"></div>
<div class="a" style="left:869.9px;top:527.1px;width:14px;height:17.7px;background:#aa72d9"></div>
<div class="a" style="left:889.6px;top:543.8px;width:14px;height:1px;background:#cc0000"></div>
<div class="a" style="left:909.3px;top:531.7px;width:14px;height:13.1px;background:#aa72d9"></div>
<div class="a" style="left:929.0px;top:523.0px;width:14px;height:21.7px;background:#aa72d9"></div>
<div class="a" style="left:948.8px;top:518.7px;width:14px;height:26.1px;background:#aa72d9"></div>
<div class="a" style="left:968.5px;top:535.9px;width:14px;height:8.8px;background:#aa72d9"></div>
<div class="a" style="left:988.2px;top:514.1px;width:14px;height:30.7px;background:#008000"></div>
<div class="a" style="left:1007.9px;top:531.7px;width:14px;height:13.1px;background:#aa72d9"></div>
<div class="a" style="left:1031px;top:365px;width:249px;height:184px;background:#fff"></div>
<div class="a" style="left:1032px;top:366px;width:243px;height:27px;background:#ab74d8"></div>
<div class="a" style="left:1032px;top:366px;width:243px;height:182px;border:1px solid #505050"></div>
<div class="a" style="left:1032px;top:393px;width:243px;height:1px;background:#505050"></div>
<div class="a" style="left:1032px;top:452px;width:243px;height:1px;background:#505050"></div>
<div class="a" style="left:1032px;top:512px;width:243px;height:1px;background:#505050"></div>
<div class="t s" style="left:1032px;top:374.45px;width:243px;text-align:center;font-size:12.2px;font-weight:bold;color:#faf3fd">Operational Downtime</div>
<div class="a" style="left:1051.5px;top:417.5px;width:20.5px;height:20.5px;border-radius:50%;background:#cc0000"></div>
<div class="t" style="left:1113px;top:405px;width:140px;text-align:center;font-size:34px;font-weight:bold;color:#7030a0">5.3</div>
<div class="t s" style="left:1065px;top:456.3px;width:100px;text-align:right;font-size:10.8px;font-weight:bold;color:#111">Target Value:</div>
<div class="t s" style="left:1156.8px;top:456.3px;width:80px;text-align:center;font-size:10.8px;font-weight:bold;color:#111">4.2</div>
<div class="t s" style="left:1065px;top:473.0px;width:100px;text-align:right;font-size:10.8px;font-weight:bold;color:#111">Change</div>
<div class="t s" style="left:1156.8px;top:473.0px;width:80px;text-align:center;font-size:10.8px;font-weight:bold;color:#a51c1c">+1.1</div>
<div class="t s" style="left:1156.8px;top:494.9px;width:80px;text-align:center;font-size:10.8px;font-weight:bold;color:#a51c1c">+26.2%</div>
<svg class="ic" style="left:1151px;top:495px" width="12" height="12"><path d="M0 11.3L5.75 0L11.5 11.3Z" fill="#cc0000"/></svg>
<div class="a" style="left:1038.0px;top:543.8px;width:14px;height:1px;background:#cc0000"></div>
<div class="a" style="left:1057.7px;top:535.9px;width:14px;height:8.8px;background:#aa72d9"></div>
<div class="a" style="left:1077.4px;top:531.7px;width:14px;height:13.1px;background:#aa72d9"></div>
<div class="a" style="left:1097.2px;top:540.3px;width:14px;height:4.5px;background:#aa72d9"></div>
<div class="a" style="left:1116.9px;top:527.1px;width:14px;height:17.7px;background:#aa72d9"></div>
<div class="a" style="left:1136.6px;top:543.8px;width:14px;height:1px;background:#cc0000"></div>
<div class="a" style="left:1156.3px;top:531.7px;width:14px;height:13.1px;background:#aa72d9"></div>
<div class="a" style="left:1176.0px;top:523.0px;width:14px;height:21.7px;background:#aa72d9"></div>
<div class="a" style="left:1195.8px;top:518.7px;width:14px;height:26.1px;background:#aa72d9"></div>
<div class="a" style="left:1215.5px;top:535.9px;width:14px;height:8.8px;background:#aa72d9"></div>
<div class="a" style="left:1235.2px;top:514.1px;width:14px;height:30.7px;background:#008000"></div>
<div class="a" style="left:1254.9px;top:531.7px;width:14px;height:13.1px;background:#aa72d9"></div>
</body></html>
